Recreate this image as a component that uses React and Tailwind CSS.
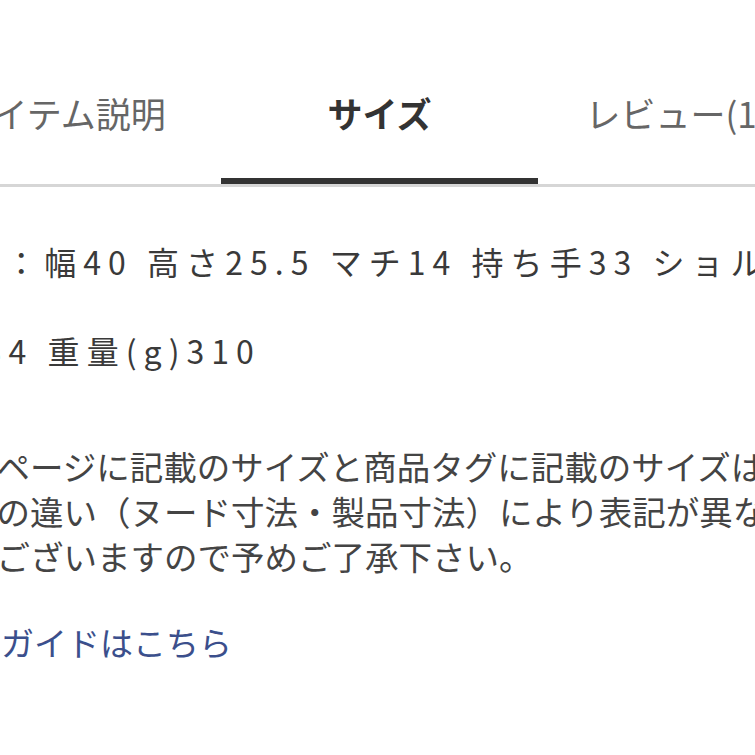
import React from "react";

const jp = { fontFamily: '"Noto Sans CJK JP", "Noto Sans", sans-serif' };

const tabs = [
  { label: "アイテム説明", active: false },
  { label: "サイズ", active: true },
  { label: "レビュー(123)", active: false },
];

export default function App() {
  return (
    <div className="w-[755px] h-[755px] overflow-hidden bg-white text-[#333]" style={jp}>
      {/* tabs */}
      <div className="pt-[72px] border-b-[3px] border-[#d6d6d6]">
        <div className="flex ml-[-96px] w-[951px]">
          {tabs.map((t) => (
            <div key={t.label} className="w-[317px] shrink-0 flex flex-col items-center">
              <div
                className={
                  "h-[82px] flex items-center whitespace-nowrap text-[35px] " +
                  (t.active ? "font-bold text-[#333]" : "text-[#666]")
                }
              >
                {t.label}
              </div>
              <div className="h-[24px]" />
              <div className={"w-full h-[6px] " + (t.active ? "bg-[#333]" : "bg-transparent")} />
            </div>
          ))}
        </div>
      </div>

      {/* size text */}
      <div className="ml-[-111px] w-[1000px] mt-[30px] text-[32px] leading-[89px] tracking-[0.22em] text-[#3a3a3a] whitespace-nowrap">
        <div>サイズ：幅40 高さ25.5 マチ14 持ち手33 ショルダー</div>
        <div className="ml-[70px]">134 重量(g)310</div>
      </div>

      <div className="ml-[-104px] w-[1000px] mt-[48px] text-[33.5px] leading-[45px] text-[#444] whitespace-nowrap">
        <div>※このページに記載のサイズと商品タグに記載のサイズは</div>
        <div>測り方の違い（ヌード寸法・製品寸法）により表記が異なる</div>
        <div>場合がございますので予めご了承下さい。</div>
      </div>

      <div className="ml-[-97px] mt-[42px] text-[33px] leading-[45px] text-[#3b4f8c] whitespace-nowrap">
        サイズガイドはこちら
      </div>
    </div>
  );
}
